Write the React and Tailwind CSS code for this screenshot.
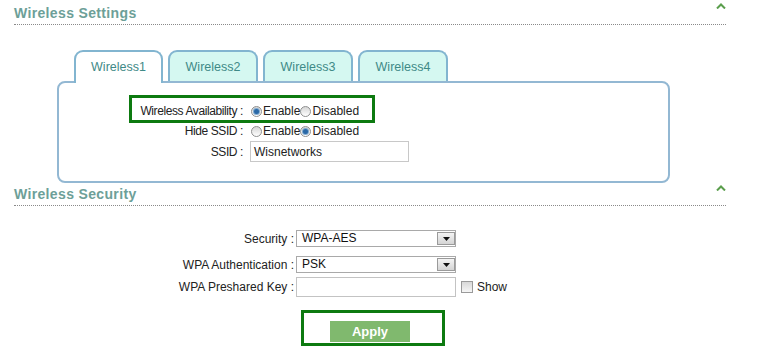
import React from "react";

function Caret({ className = "" }) {
  return (
    <svg width="10" height="6" viewBox="0 0 10 6" className={className}>
      <polyline points="1,5.5 5,1.5 9,5.5" fill="none" stroke="#5a9e4c" strokeWidth="2" />
    </svg>
  );
}

function SectionHeading({ title, className = "", caretClass = "" }) {
  return (
    <div
      className={`flex justify-between items-start border-b border-dotted border-[#8a8a8a] pb-[1px] ${className}`}
    >
      <span className="text-[14px] leading-[20px] font-bold tracking-[0.35px] text-[#6d9f98]">
        {title}
      </span>
      <Caret className={caretClass} />
    </div>
  );
}

function Radio({ checked }) {
  return (
    <span className="inline-flex items-center justify-center w-[11px] h-[11px] rounded-full border border-[#8e8f8f] bg-gradient-to-b from-[#d6d6d6] to-white shrink-0">
      {checked && <span className="w-[5px] h-[5px] rounded-full bg-[#2a68a6] ring-1 ring-[#7fa9cf]" />}
    </span>
  );
}

function Tab({ label, active }) {
  return (
    <div
      className={
        active
          ? "w-[89px] h-[33px] border-2 border-b-0 border-[#82b5d0] rounded-t-[9px] bg-white flex justify-center pt-[6px] relative z-10"
          : "w-[90px] h-[31px] border-2 border-b-0 border-[#82b5d0] rounded-t-[9px] bg-[#d5f8f1] flex justify-center pt-[6px]"
      }
    >
      <span className="text-[12.5px] leading-[18px] text-[#3f8a87]">{label}</span>
    </div>
  );
}

function Select({ value }) {
  return (
    <div className="w-[160px] h-[17px] border border-[#a9a9a9] bg-white flex items-center justify-between">
      <span className="text-[12px] leading-[15px] text-[#111] pl-[5px]">{value}</span>
      <span className="w-[18px] h-[13px] border border-[#9a9a9a] bg-gradient-to-b from-[#f4f4f4] to-[#d4d4d4] flex items-center justify-center">
        <svg width="7" height="4" viewBox="0 0 7 4">
          <polygon points="0,0 7,0 3.5,4" fill="#111" />
        </svg>
      </span>
    </div>
  );
}

const label = "text-right text-[12px] tracking-[-0.4px] text-[#222]";

export default function App() {
  return (
    <div className="w-[781px] h-[352px] overflow-hidden bg-white pl-[14px] pr-[55px] font-['Liberation_Sans',Arial,sans-serif]">
      {/* Wireless Settings */}
      <SectionHeading title="Wireless Settings" className="pt-[3px]" />

      <div className="ml-[43px] mt-[25px] w-[613px]">
        <div className="flex items-start gap-[5px] pl-[17px] h-[31px]">
          <Tab label="Wireless1" active />
          <Tab label="Wireless2" />
          <Tab label="Wireless3" />
          <Tab label="Wireless4" />
        </div>

        <div className="relative border-2 border-[#93b8d3] rounded-[8px] pt-[18px] pb-[19px]">
          <div className="h-[20px] flex items-center">
            <span className={`w-[184px] ${label}`}>Wireless Availability :</span>
            <div className="ml-[8px] flex items-center text-[12px] text-[#222]">
              <Radio checked />
              <span className="ml-[1px]">Enable</span>
              <Radio />
              <span className="ml-[1px]">Disabled</span>
            </div>
          </div>
          <div className="h-[20px] flex items-center">
            <span className={`w-[184px] ${label}`}>Hide SSID :</span>
            <div className="ml-[8px] flex items-center text-[12px] text-[#222]">
              <Radio />
              <span className="ml-[1px]">Enable</span>
              <Radio checked />
              <span className="ml-[1px]">Disabled</span>
            </div>
          </div>
          <div className="h-[21px] flex items-center">
            <span className={`w-[184px] ${label}`}>SSID :</span>
            <div className="ml-[7px] w-[159px] h-[21px] border border-[#c8c8c8] flex items-center pl-[3px] text-[12px] text-[#222]">
              Wisnetworks
            </div>
          </div>

          {/* highlight */}
          <div className="absolute left-[70px] top-[12px] w-[246px] h-[28px] border-[3px] border-[#0d7a10]" />
        </div>
      </div>

      {/* Wireless Security */}
      <SectionHeading title="Wireless Security" className="pt-[1px]" caretClass="mt-[1px]" />

      <div className="mt-[24px]">
        <div className="h-[17px] flex items-center">
          <span className="w-[280px] text-right text-[12px] text-[#222]">Security :</span>
          <div className="ml-[2px]">
            <Select value="WPA-AES" />
          </div>
        </div>
        <div className="mt-[9px] h-[17px] flex items-center">
          <span className="w-[280px] text-right text-[12px] text-[#222]">WPA Authentication :</span>
          <div className="ml-[2px]">
            <Select value="PSK" />
          </div>
        </div>
        <div className="mt-[4px] h-[20px] flex items-center">
          <span className="w-[280px] text-right text-[12px] text-[#222]">WPA Preshared Key :</span>
          <div className="ml-[2px] w-[160px] h-[20px] border border-[#c3c3c3] bg-white" />
          <span className="ml-[5px] w-[12px] h-[12px] border border-[#9a9a9a] bg-gradient-to-b from-[#d8d8d8] to-[#f6f6f6]" />
          <span className="ml-[4px] text-[12px] text-[#222]">Show</span>
        </div>

        <div className="mt-[13px] ml-[287px] w-[144px] h-[36px] border-[3px] border-[#0d7a10] pl-[26px] pt-[6px]">
          <button className="w-[80px] h-[21px] bg-[#80b96e] text-white font-bold text-[13px] leading-[21px]">
            Apply
          </button>
        </div>
      </div>
    </div>
  );
}
